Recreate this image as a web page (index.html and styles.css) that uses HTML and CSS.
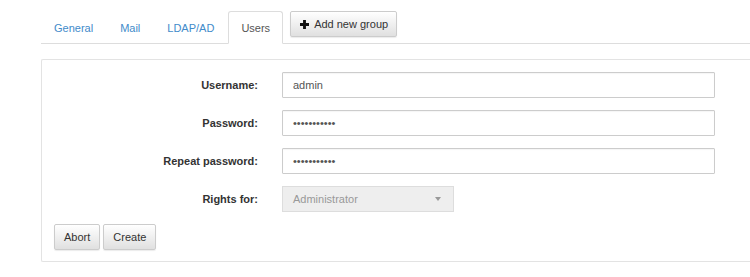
FILE: index.html
```html
<!DOCTYPE html>
<html lang="en">
  <head>
    <meta charset="UTF-8" />
    <meta name="viewport" content="width=device-width, initial-scale=1.0" />
    <title>Users</title>
    <link rel="stylesheet" href="styles.css">
  </head>
  <body>
    <div class="page">
      <ul class="tabs">
        <li><a href="#">General</a></li>
        <li><a href="#">Mail</a></li>
        <li><a href="#">LDAP/AD</a></li>
        <li class="active"><a href="#">Users</a></li>
        <li class="tab-action">
          <button class="btn btn-add">
            <svg width="9" height="9" viewBox="0 0 10 10"><path d="M3.4 0h3.2v3.4H10v3.2H6.6V10H3.4V6.6H0V3.4h3.4z" fill="#111"/></svg>
            Add new group
          </button>
        </li>
      </ul>

      <form class="panel">
        <div class="form-row">
          <label for="username">Username:</label>
          <input type="text" id="username" class="field" value="admin" />
        </div>
        <div class="form-row">
          <label for="password">Password:</label>
          <input type="password" id="password" class="field" value="adminadmin1" />
        </div>
        <div class="form-row">
          <label for="password2">Repeat password:</label>
          <input type="password" id="password2" class="field" value="adminadmin1" />
        </div>
        <div class="form-row">
          <label for="rights">Rights for:</label>
          <div class="select" id="rights">
            <span>Administrator</span>
            <span class="caret"></span>
          </div>
        </div>
        <div class="actions">
          <button type="button" class="btn">Abort</button>
          <button type="submit" class="btn">Create</button>
        </div>
      </form>
    </div>
  </body>
</html>
```

FILE: styles.css
```css
body {
  font-family: "Liberation Sans", Arial, sans-serif;
  font-size: 11px;
  color: #333;
  margin: 0;
  background: #fff;
}
.page {
  margin-left: 41px;
  padding-top: 11px;
}
.tabs {
  list-style: none;
  margin: 0;
  padding: 0;
  display: flex;
  align-items: flex-start;
  border-bottom: 1px solid #ddd;
}
.tabs li {
  margin-right: 1px;
  margin-bottom: -1px;
}
.tabs li a {
  display: block;
  padding: 8px 12px 7px;
  line-height: 16px;
  color: #428bca;
  text-decoration: none;
  border: 1px solid transparent;
  border-radius: 3px 3px 0 0;
}
.tabs li.active a {
  color: #555;
  background: #fff;
  border-color: #ddd #ddd transparent;
}
.tabs .tab-action {
  margin-left: 6px;
}
.btn {
  font-family: inherit;
  font-size: 11px;
  color: #333;
  height: 26px;
  padding: 0 9px;
  border: 1px solid #ccc;
  border-radius: 2px;
  background: linear-gradient(to bottom, #fff 0%, #e0e0e0 100%);
  box-shadow: 0 1px 1px rgba(0, 0, 0, 0.08);
  cursor: pointer;
}
.btn-add {
  display: flex;
  align-items: center;
  gap: 5px;
  width: 107px;
  padding: 0 0 0 9px;
}
.panel {
  margin-top: 15px;
  border: 1px solid #e3e3e3;
  border-right: none;
  border-radius: 2px 0 0 2px;
  padding: 12px 12px 11px;
}
.form-row {
  display: grid;
  grid-template-columns: 204px 1fr;
  column-gap: 24px;
  align-items: center;
  margin-bottom: 12px;
}
.form-row label {
  text-align: right;
  font-weight: bold;
}
.field {
  box-sizing: border-box;
  width: 433px;
  height: 26px;
  padding: 0 10px;
  border: 1px solid #ccc;
  border-radius: 1px;
  font-family: inherit;
  font-size: 11px;
  color: #555;
  box-shadow: inset 0 1px 1px rgba(0, 0, 0, 0.04);
}
.select {
  box-sizing: border-box;
  width: 172px;
  height: 26px;
  padding: 0 10px;
  display: flex;
  align-items: center;
  justify-content: space-between;
  background: #eee;
  border: 1px solid #ddd;
  color: #999;
}
.caret {
  width: 0;
  height: 0;
  border-left: 3px solid transparent;
  border-right: 3px solid transparent;
  border-top: 4px solid #999;
  margin-right: 2px;
}
.actions {
  display: flex;
  gap: 3px;
}
```
